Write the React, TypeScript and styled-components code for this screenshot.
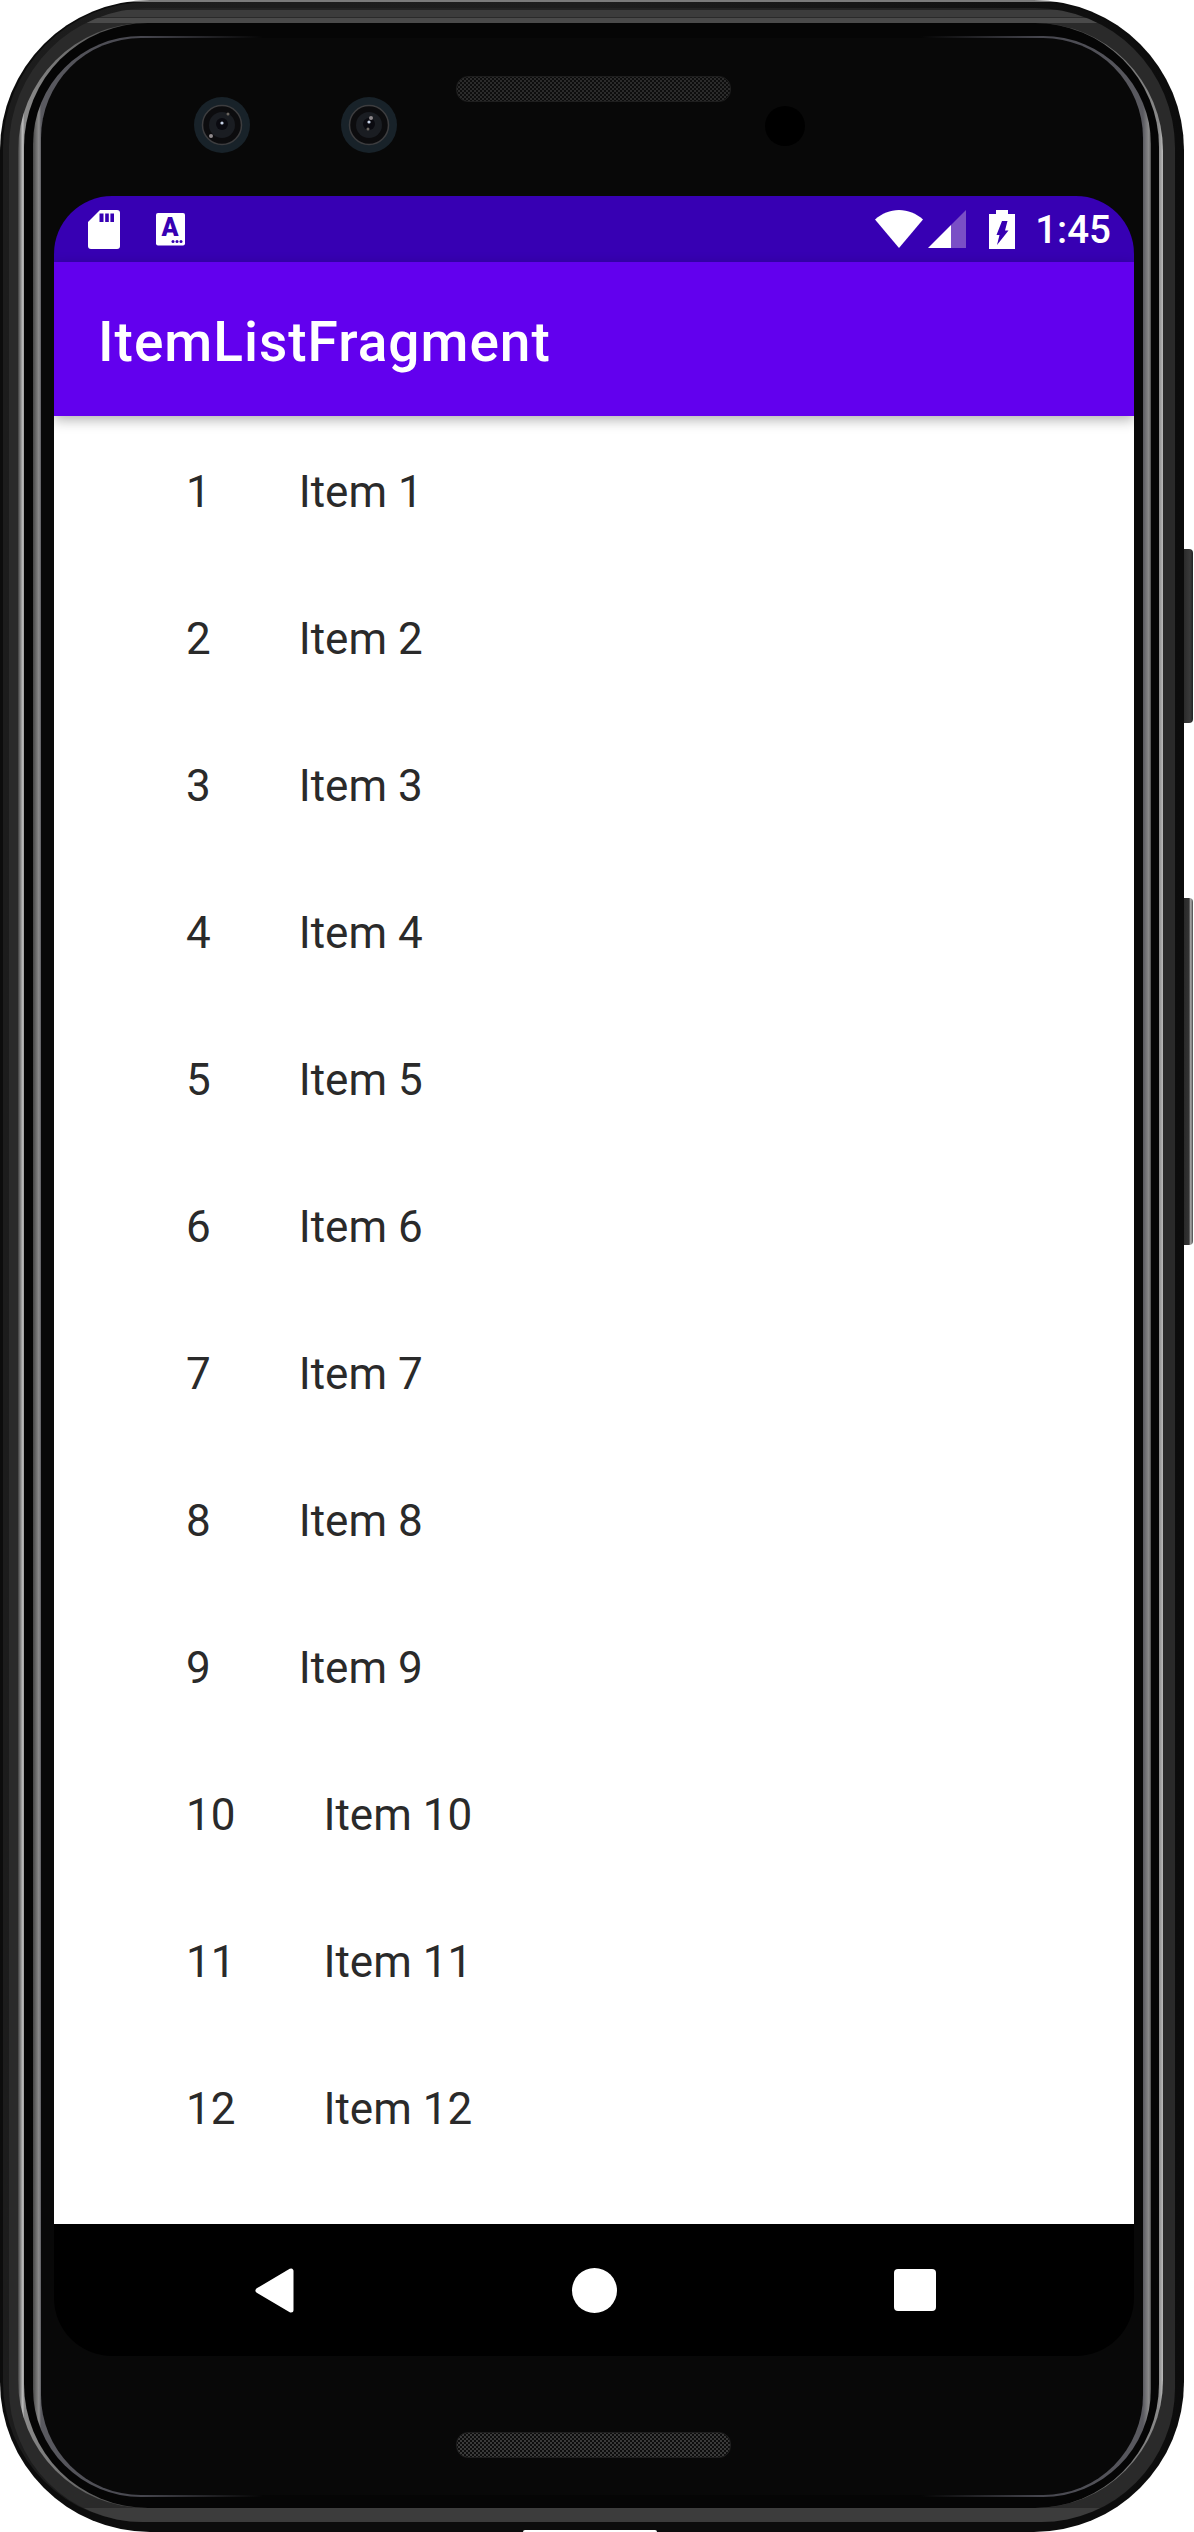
import React from "react";
import styled, { createGlobalStyle } from "styled-components";

const GlobalStyle = createGlobalStyle`
  html, body {
    margin: 0;
    padding: 0;
    background: #fff;
  }
`;

const Page = styled.div`
  width: 1194px;
  height: 2532px;
  overflow: hidden;
  font-family: Roboto, "Noto Sans", sans-serif;
`;

/* phone body: every ring is one more nested box with its own padding */
const Shell = styled.div`
  position: relative;
  box-sizing: border-box;
  width: 1184px;
  height: 2532px;
  padding: 2px 3px 10px;
  border-radius: 150px;
  background: linear-gradient(180deg, #7a7a7a 0, #7a7a7a 2px, #0c0c0c 2px);
`;

const OuterRim = styled.div`
  box-sizing: border-box;
  height: 100%;
  padding: 6px 6px 0;
  border-radius: 146px 146px 140px 140px;
  background: linear-gradient(90deg, #1c1c1c 0, #1e1e1e 50%, #0c0c0c 100%);
`;

const MidRim = styled.div`
  box-sizing: border-box;
  height: 100%;
  padding: 15px 12px 14px 9px;
  border-radius: 140px 140px 134px 134px;
  background: linear-gradient(
    180deg,
    #242424 0,
    #242424 2px,
    #3c3c3c 2px,
    #3c3c3c 9px,
    #2a2a2a 9px,
    #2a2a2a 10px,
    #4a4a4a 10px,
    #4a4a4a 15px,
    #2a2a2a 15px,
    #2a2a2a calc(100% - 14px),
    #3c3c3c calc(100% - 14px)
  );
`;

const ShineRim = styled.div`
  box-sizing: border-box;
  height: 100%;
  padding: 0 4px 0 6px;
  border-radius: 128px;
  background: linear-gradient(
    90deg,
    #3c3c3c 0,
    #c4c4c4 5px,
    #8a8a8a 6px,
    #484848 110px,
    #484848 calc(100% - 110px),
    #8a8a8a calc(100% - 4px),
    #bcbcbc 100%
  );
`;

const BlackRim = styled.div`
  box-sizing: border-box;
  height: 100%;
  padding: 13px 8px 11px 9px;
  border-radius: 124px;
  background: #050505;
`;

const InnerShine = styled.div`
  box-sizing: border-box;
  height: 100%;
  padding: 2px 8px;
  border-radius: 108px;
  background: linear-gradient(
    90deg,
    #484848 0,
    #8c8c8c 6px,
    #5a5a60 8px,
    #46464e 110px,
    transparent 230px,
    transparent calc(100% - 230px),
    #46464e calc(100% - 110px),
    #5a5a60 calc(100% - 8px),
    #8c8c8c calc(100% - 2px),
    #484848 100%
  );
`;

const Bezel = styled.div`
  box-sizing: border-box;
  display: flex;
  flex-direction: column;
  height: 100%;
  padding: 0 9px 0 13px;
  border-radius: 100px;
  background: #080808;
`;

const TopDeck = styled.div`
  display: flex;
  align-items: flex-start;
  height: 158px;
  padding: 59px 0 0 140px;
  box-sizing: border-box;
`;

const BottomDeck = styled.div`
  box-sizing: border-box;
  height: 139px;
  padding: 76px 0 0 402px;
`;

const Lens = styled.svg`
  flex: none;
  margin-right: ${(p: { $gap: number }) => p.$gap}px;
`;

const Speaker = styled.div<{ $lift?: number; $dot: string }>`
  box-sizing: border-box;
  flex: none;
  width: 275px;
  height: 26px;
  margin-top: ${(p) => p.$lift ?? 0}px;
  border: 1px solid #1e1e1e;
  border-radius: 12px;
  background-color: #0d0d0d;
  background-image: radial-gradient(${(p) => p.$dot} 1px, transparent 1.2px),
    radial-gradient(${(p) => p.$dot} 1px, transparent 1.2px);
  background-size: 4px 4px;
  background-position: 0 0, 2px 2px;
`;

const SensorHole = styled.div`
  flex: none;
  width: 40px;
  height: 40px;
  margin: 9px 0 0 34px;
  border-radius: 50%;
  background: #000;
`;

const Screen = styled.div`
  display: flex;
  flex-direction: column;
  flex: none;
  width: 1080px;
  height: 2160px;
  overflow: hidden;
  border-radius: 58px;
`;

const StatusBar = styled.div`
  box-sizing: border-box;
  display: flex;
  align-items: center;
  justify-content: space-between;
  flex: none;
  height: 66px;
  padding: 0 23px 0 34px;
  background: #3700b3;
`;

const StatusGroup = styled.div`
  display: flex;
  align-items: center;
`;

const StatusIcon = styled.svg<{ $left?: number }>`
  display: block;
  flex: none;
  margin-left: ${(p) => p.$left ?? 0}px;
`;

const Clock = styled.span`
  margin-left: 20px;
  color: #fff;
  font-size: 38.5px;
  font-weight: 500;
  line-height: 45px;
`;

const AppBar = styled.div`
  position: relative;
  z-index: 1;
  display: flex;
  align-items: center;
  flex: none;
  height: 154px;
  padding-left: 44px;
  background: #6200ee;
  box-shadow: 0 4px 12px rgba(0, 0, 0, 0.3);
`;

const Title = styled.h1`
  margin: 5px 0 0;
  color: #fff;
  font-size: 55px;
  font-weight: 500;
  letter-spacing: 1px;
  line-height: 64px;
`;

const ItemList = styled.div`
  flex: 1;
  min-height: 0;
  padding: 2px 0 0 132px;
  background: #fff;
`;

const ItemRow = styled.div`
  display: flex;
  align-items: center;
  height: 147px;
  color: #2a2a2a;
  font-size: 44px;
  line-height: 52px;
`;

const ItemNumber = styled.span`
  margin-right: 88px;
`;

const NavBar = styled.div`
  display: grid;
  grid-template-columns: 320px 320px 322px;
  align-items: center;
  justify-items: center;
  flex: none;
  height: 132px;
  padding-left: 60px;
  background: #000;
`;

const HomeDot = styled.div`
  width: 45px;
  height: 45px;
  border-radius: 50%;
  background: #fff;
`;

const RecentBox = styled.div`
  width: 42px;
  height: 42px;
  border-radius: 4px;
  background: #fff;
`;

const SideKey = styled.div<{ $top: number; $height: number; $shine?: boolean }>`
  position: absolute;
  top: ${(p) => p.$top}px;
  left: 100%;
  box-sizing: border-box;
  width: 9px;
  height: ${(p) => p.$height}px;
  border-radius: 0 4px 4px 0;
  background: ${(p) =>
    p.$shine
      ? "linear-gradient(90deg, #2a2a2a 0, #333 55%, #b0b0b0 75%, #444 100%)"
      : "linear-gradient(90deg, #2c2c2c 0, #3a3a3a 70%, #222 100%)"};
`;

const BottomNotch = styled.div`
  position: absolute;
  bottom: 0;
  left: 523px;
  width: 134px;
  height: 2px;
  border-radius: 2px 2px 0 0;
  background: #fff;
`;

const Camera = ({ gap, flip }: { gap: number; flip?: boolean }) => (
  <Lens $gap={gap} width="56" height="56" viewBox="0 0 56 56">
    <circle cx="28" cy="28" r="28" fill="#182229" />
    <circle cx="28" cy="28" r="19.5" fill="#0c0c0e" stroke="#3d3d3f" strokeWidth="1.5" />
    <circle cx="28" cy="28" r="13" fill="#1a1d22" />
    <circle cx="28" cy="27" r="6" fill="#0a0a10" />
    <circle cx="28" cy={flip ? 25 : 26} r="1.6" fill="#c8d4e8" />
    <circle cx={flip ? 30 : 17} cy={flip ? 21 : 39} r="2" fill="#8f8a8c" />
    <circle cx={flip ? 27 : 34} cy={flip ? 32 : 17} r="1.5" fill="#6b6660" />
  </Lens>
);

const App = () => {
  const items = Array.from({ length: 12 }, (_, i) => i + 1);

  return (
    <Page>
      <GlobalStyle />
      <Shell>
        <SideKey $top={549} $height={174} />
        <SideKey $top={898} $height={347} $shine />
        <BottomNotch />
        <OuterRim>
          <MidRim>
            <ShineRim>
              <BlackRim>
                <InnerShine>
                  <Bezel>
                    <TopDeck>
                      <Camera gap={91} />
                      <Camera gap={59} flip />
                      <Speaker $lift={-21} $dot="#2b2b2b" />
                      <SensorHole />
                    </TopDeck>
                    <Screen>
                      <StatusBar>
                        <StatusGroup>
                          <StatusIcon width="32" height="39" viewBox="0 0 32 39">
                            <path
                              d="M12 0H29a3 3 0 0 1 3 3V36a3 3 0 0 1-3 3H3a3 3 0 0 1-3-3V12Z"
                              fill="#fff"
                            />
                            <rect x="11.5" y="3.5" width="4" height="8.5" fill="#3700b3" />
                            <rect x="17.2" y="3.5" width="3.6" height="8.5" fill="#3700b3" />
                            <rect x="22.4" y="3.5" width="3.6" height="8.5" fill="#3700b3" />
                          </StatusIcon>
                          <StatusIcon $left={36} width="29" height="33" viewBox="0 0 29 33">
                            <rect width="29" height="32.5" rx="2" fill="#fff" />
                            <text
                              x="14"
                              y="23"
                              textAnchor="middle"
                              fontFamily="Roboto, sans-serif"
                              fontSize="25"
                              fontWeight="900"
                              fill="#3700b3"
                            >
                              A
                            </text>
                            <circle cx="17" cy="28.5" r="1.5" fill="#3700b3" />
                            <circle cx="21" cy="28.5" r="1.5" fill="#3700b3" />
                            <circle cx="25" cy="28.5" r="1.5" fill="#3700b3" />
                          </StatusIcon>
                        </StatusGroup>
                        <StatusGroup>
                          <StatusIcon width="48" height="38" viewBox="0 0 48 38">
                            <path d="M24 38L0 9.5C7 3.5 15 0 24 0s17 3.5 24 9.5Z" fill="#fff" />
                          </StatusIcon>
                          <StatusIcon $left={5} width="38" height="38" viewBox="0 0 38 38">
                            <path d="M23 15V38H0Z" fill="#fff" />
                            <path d="M23 15L38 0V38H23Z" fill="#7a4fc6" />
                          </StatusIcon>
                          <StatusIcon $left={23} width="26" height="39" viewBox="0 0 26 39">
                            <path
                              d="M7 0H19V4H26V39H0V4H7ZM13 11L7.5 25H10.5L8 35L19.5 20.5H16L18.5 11Z"
                              fill="#fff"
                              fillRule="evenodd"
                            />
                          </StatusIcon>
                          <Clock>1:45</Clock>
                        </StatusGroup>
                      </StatusBar>
                      <AppBar>
                        <Title>ItemListFragment</Title>
                      </AppBar>
                      <ItemList>
                        {items.map((n) => (
                          <ItemRow key={n}>
                            <ItemNumber>{n}</ItemNumber>
                            <span>Item {n}</span>
                          </ItemRow>
                        ))}
                      </ItemList>
                      <NavBar>
                        <svg width="39" height="45" viewBox="0 0 39 45">
                          <path
                            d="M36 3V42L3 22.5Z"
                            fill="#fff"
                            stroke="#fff"
                            strokeWidth="5"
                            strokeLinejoin="round"
                          />
                        </svg>
                        <HomeDot />
                        <RecentBox />
                      </NavBar>
                    </Screen>
                    <BottomDeck>
                      <Speaker $dot="#3a3a3a" />
                    </BottomDeck>
                  </Bezel>
                </InnerShine>
              </BlackRim>
            </ShineRim>
          </MidRim>
        </OuterRim>
      </Shell>
    </Page>
  );
};

export default App;
